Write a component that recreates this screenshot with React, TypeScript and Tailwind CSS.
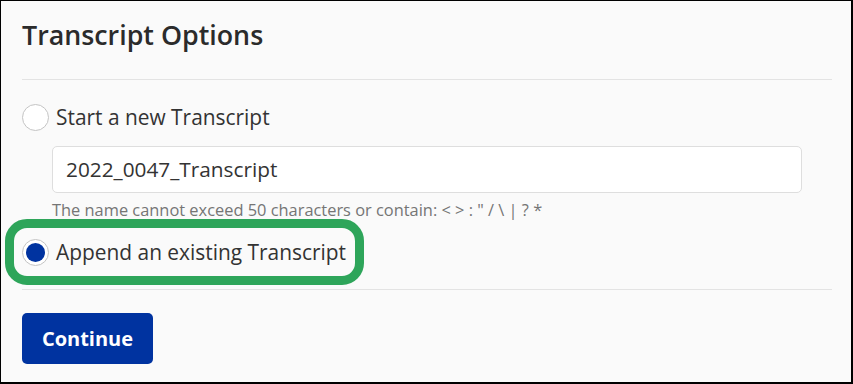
import React from 'react';

const Radio: React.FC<{ checked?: boolean }> = ({ checked }) => (
  <span className="flex h-[27px] w-[27px] shrink-0 items-center justify-center rounded-full border border-[#c4c4c4] bg-white">
    {checked && <span className="h-[19px] w-[19px] rounded-full bg-[#0033a0]" />}
  </span>
);

export default function App() {
  return (
    <div className="h-[384px] w-[853px] border-t border-l border-r-2 border-b-2 border-black bg-[#fafafa] pl-[21px] pr-[19px] font-['Open_Sans',sans-serif] text-[#333]">
      {/* Header */}
      <div className="h-[79px] border-b border-[#e3e3e3] pt-[16px]">
        <h1 className="text-[26.8px] leading-[36px] font-semibold text-[#2b2b2b]">Transcript Options</h1>
      </div>

      {/* New transcript */}
      <label className="mt-[24px] flex h-[27px] items-center gap-[7px]">
        <Radio />
        <span className="text-[20.9px] leading-[27px]">Start a new Transcript</span>
      </label>
      <div className="mt-[15px] ml-[30px] mr-[30px] flex h-[47px] items-center rounded-[5px] border border-[#dedede] bg-white pl-[13px] text-[20.8px]">
        2022_0047_Transcript
      </div>
      <p className="mt-[6px] ml-[30px] text-[16.4px] leading-[22px] text-[#757575]">
        The name cannot exceed 50 characters or contain: &lt; &gt; : &quot; / \ | ? *
      </p>

      {/* Append transcript */}
      <div className="relative mt-[18px]">
        <label className="flex h-[27px] items-center gap-[7px]">
          <Radio checked />
          <span className="text-[20.9px] leading-[27px]">Append an existing Transcript</span>
        </label>
        <span className="pointer-events-none absolute -left-[17px] -top-[20px] h-[66px] w-[359px] rounded-[22px] border-[9px] border-[#2ea55a]" />
      </div>

      <div className="mt-[23px] h-px bg-[#e3e3e3]" />

      <button className="mt-[23px] flex h-[51px] w-[131px] items-center justify-center rounded-[5px] bg-[#0033a0] text-[20px] font-bold text-white">
        Continue
      </button>
    </div>
  );
}
